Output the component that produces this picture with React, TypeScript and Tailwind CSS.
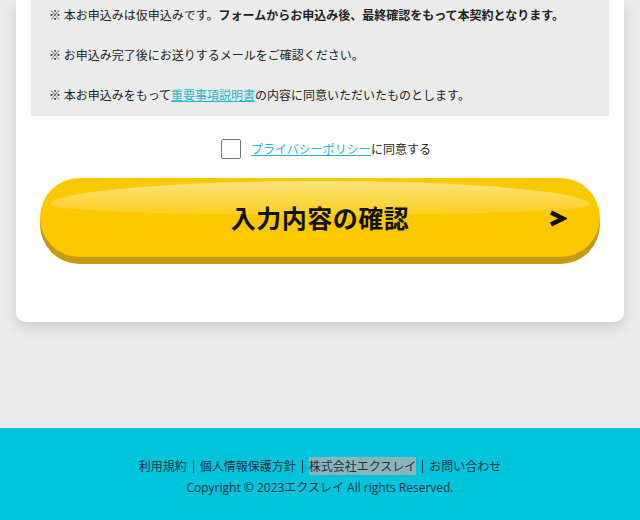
import React from "react";

const notes = [
  {
    plain: "※ 本お申込みは仮申込みです。",
    bold: "フォームからお申込み後、最終確認をもって本契約となります。",
  },
  { plain: "※ お申込み完了後にお送りするメールをご確認ください。" },
];

const footerLinks = ["利用規約", "個人情報保護方針", "株式会社エクスレイ", "お問い合わせ"];

export default function App() {
  return (
    <div
      className="min-h-[520px] bg-[#ebebeb] flex flex-col text-[#222]"
      style={{ fontFamily: '"Noto Sans CJK JP", "Noto Sans", sans-serif' }}
    >
      <div className="px-4 h-[322px]">
        <div className="bg-white rounded-b-[10px] shadow-[0_6px_14px_rgba(0,0,0,0.12)] px-[15px] h-full flex flex-col">
          {/* Notes box */}
          <div className="bg-[#ebebeb] px-[18px] pt-[5px] pb-[11px] text-[12px] leading-5">
            {notes.map((n, i) => (
              <p key={i} className="mb-[20px]">
                {n.plain}
                {n.bold && <span className="font-bold">{n.bold}</span>}
              </p>
            ))}
            <p>
              ※ 本お申込みをもって
              <a className="text-[#1fb4cf] underline">重要事項説明書</a>
              の内容に同意いただいたものとします。
            </p>
          </div>

          {/* Agreement */}
          <label className="mt-[23px] flex items-center justify-center gap-[10px] pl-[12px] text-[12px]">
            <span className="w-5 h-5 border border-[#777] rounded-[2px] bg-white" />
            <span>
              <a className="text-[#1fb4cf] underline">プライバシーポリシー</a>
              に同意する
            </span>
          </label>

          {/* Confirm button */}
          <button className="relative mt-[19px] mx-[9px] h-[79px] rounded-full bg-[#fcc800] shadow-[0_7px_0_#c39b12] flex items-center justify-center overflow-hidden">
            <span className="absolute left-[10px] right-[10px] top-[3px] h-[34px] rounded-[50%/70%_70%_30%_30%] bg-gradient-to-b from-[rgba(255,255,255,0.5)] via-[rgba(255,255,255,0.3)] to-[rgba(255,255,255,0.12)]" />
            <span className="relative text-[25px] font-bold text-[#111] tracking-[0.5px]">入力内容の確認</span>
            <svg className="absolute right-[33px] top-[32px]" width="19" height="17" viewBox="0 0 19 17">
              <polyline points="3,2.5 15,8.5 3,14.5" fill="none" stroke="#111" strokeWidth="4.5" strokeLinejoin="miter" />
            </svg>
          </button>
        </div>
      </div>

      <div className="flex-1" />

      {/* Footer */}
      <footer className="h-[92px] bg-[#00c3dc] flex flex-col items-center pt-[29px] text-[12px] text-[#1f3340]">
        <div className="flex items-center leading-[18px]">
          {footerLinks.map((l, i) => (
            <React.Fragment key={l}>
              {i > 0 && <span className="mx-[6px] w-px h-[13px] bg-[#1f3340]" />}
              <span className={i === 2 ? "bg-[#8cb4bb]" : ""}>{l}</span>
            </React.Fragment>
          ))}
        </div>
        <div className="mt-[4px] leading-[18px]" style={{ fontFamily: '"Open Sans", "Noto Sans CJK JP", sans-serif' }}>
          Copyright © 2023エクスレイ All rights Reserved.
        </div>
      </footer>
    </div>
  );
}
